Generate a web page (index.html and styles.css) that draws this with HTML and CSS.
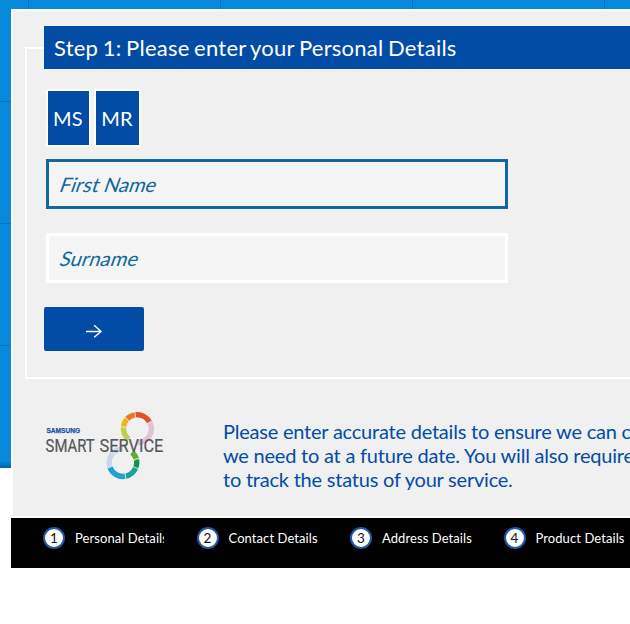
FILE: index.html
```html
<!DOCTYPE html>
<html lang="en">
<head>
<meta charset="utf-8">
<title>Personal Details</title>
<link rel="stylesheet" href="styles.css">
</head>
<body>
<div class="backdrop"></div>
<main class="page">
  <section class="panel">
    <form class="step">
      <h1 class="legend">Step 1: Please enter your Personal Details</h1>
      <div class="titles">
        <button type="button" class="title title-ms">MS</button>
        <button type="button" class="title title-mr">MR</button>
      </div>
      <label class="field active"><span class="hint">First Name</span><input type="text"></label>
      <label class="field"><span class="hint surname">Surname</span><input type="text"></label>
      <button type="button" class="next" aria-label="Next">
        <svg width="18" height="14" viewBox="0 0 18 14"><path d="M1 7.5H16M9.2 1.2L16 7.5L9.2 13.3" fill="none" stroke="#fff" stroke-width="1.4"/></svg>
      </button>
    </form>
    <div class="info">
      <svg class="logo" width="120" height="72" viewBox="45 409 120 72">
        <g fill="none" stroke-width="5.4">
          <path d="M128.6 439.2A13.9 13.9 0 0 1 123.6 427" stroke="#bdcf4b"/>
          <path d="M123.6 427A13.9 13.9 0 0 1 127 419" stroke="#edb51c"/>
          <path d="M127 419A13.9 13.9 0 0 1 135.5 414.9" stroke="#ea7927"/>
          <path d="M135.5 414.9A13.9 13.9 0 0 1 149.7 422.2" stroke="#e45128"/>
          <path d="M149.7 422.2A13.9 13.9 0 0 1 137.4 442.7" stroke="#e2c3d5"/>
          <path d="M123 448.9A13.9 13.9 0 0 0 109.9 467.3" stroke="#ccd6e8"/>
          <path d="M109.9 467.3A13.9 13.9 0 0 0 125.5 476.2" stroke="#249fd2"/>
          <path d="M125.5 476.2A13.9 13.9 0 0 0 135.7 467.8" stroke="#1aa19b"/>
          <path d="M135.7 467.8A13.9 13.9 0 0 0 136.6 460" stroke="#07984d"/>
          <path d="M136.6 460A13.9 13.9 0 0 0 132 452.4" stroke="#65a738"/>
        </g>
        <path d="M120 426.5L126.5 427.5M134.6 411.5L135.7 418M152.3 420.6L147 423.8M125 417L129 421M106.8 468.5L112.5 466M125 473L126 479.5M133 466.5L139 469M133 460L140 457.8M111 450L115 455" stroke="#f0f0f0" stroke-width=".8"/>
        <text class="brand" x="46.5" y="432.7" textLength="33.5" lengthAdjust="spacingAndGlyphs">SAMSUNG</text>
        <text class="product" x="45.6" y="451.8" textLength="49" lengthAdjust="spacingAndGlyphs">SMART</text>
        <text class="product" x="99.6" y="451.8" textLength="63.8" lengthAdjust="spacingAndGlyphs">SERVICE</text>
      </svg>
      <p class="note">Please enter accurate details to ensure we can contact you if<br>we need to at a future date. You will also require your details<br>to track the status of your service.</p>
    </div>
  </section>
  <nav class="steps">
    <div class="item"><span class="num">1</span><span class="label first">Personal Details</span></div>
    <div class="item"><span class="num">2</span><span class="label">Contact Details</span></div>
    <div class="item"><span class="num">3</span><span class="label">Address Details</span></div>
    <div class="item"><span class="num">4</span><span class="label">Product Details</span></div>
  </nav>
</main>
</body>
</html>
```
FILE: styles.css
```css
* { box-sizing: border-box; }
html { overflow: hidden; }
body {
  margin: 0;
  height: 624px;
  overflow: hidden;
  position: relative;
  background: #fff;
  font-family: Lato, "Liberation Sans", sans-serif;
}
button, input { font-family: inherit; margin: 0; }
.backdrop {
  position: absolute;
  inset: 0 0 auto;
  height: 468px;
  background:
    linear-gradient(transparent 461px, #0069ad 467px),
    repeating-linear-gradient(90deg, transparent 0 28px, #0474bc 28px 29px, transparent 29px 192px),
    repeating-linear-gradient(transparent 0 101px, #0474bc 101px 102px, transparent 102px 122px),
    #078adb;
  background-size: auto, 192px 100%, 100% 122px, auto;
}
.page { position: relative; padding: 9px 0 0 11px; width: 630px; overflow: hidden; }
.panel {
  height: 509px;
  border: 2px solid #fff;
  border-right: 0;
  background: #f0f0f0;
  padding: 36px 0 0 12px;
}
.step {
  height: 332px;
  border: 2px solid #fff;
  border-right: 0;
  padding-left: 17px;
  display: flex;
  flex-direction: column;
  align-items: flex-start;
}
.legend {
  margin: -23px 0 20px;
  width: 100%;
  height: 43px;
  flex: none;
  padding-left: 10px;
  background: #034ca6;
  color: #fff;
  font-size: 22px;
  font-weight: 400;
  line-height: 44px;
  letter-spacing: .24px;
  word-spacing: -1.3px;
  white-space: nowrap;
}
.titles { display: flex; gap: 3px; margin-left: 2px; }
.title {
  height: 58px;
  padding: 0 1px 0 0;
  border: 2px solid #fff;
  border-radius: 2px;
  background: #034ca6;
  color: #fff;
  font-size: 20px;
  letter-spacing: .3px;
}
.title-ms { width: 45px; }
.title-mr { width: 47px; }
.field {
  position: relative;
  width: 462px;
  height: 50px;
  flex: none;
  margin: 12px 0 0 2px;
  padding-left: 12px;
  border: 3px solid #fff;
  background: #f5f5f5;
  color: #11689f;
}
.field + .field { margin-top: 24px; }
.field.active { border-color: #11689f; }
.field input {
  position: absolute;
  inset: 0;
  border: 0;
  background: transparent;
  outline: none;
  font-size: 20px;
}
.hint {
  display: inline-block;
  font-size: 20px;
  line-height: 44px;
  transform: skewX(-19deg);
}
.hint.surname { letter-spacing: .15px; }
.next {
  width: 100px;
  height: 44px;
  margin-top: 24px;
  padding: 4px 0 0;
  border: 0;
  border-radius: 2px;
  background: #034ca6;
  display: flex;
  align-items: center;
  justify-content: center;
}
.info { display: flex; padding: 30px 0 0 20px; }
.logo { flex: none; margin-right: 58px; }
.brand { font: 700 6.8px "Liberation Sans", sans-serif; fill: #1850a0; stroke: #1850a0; stroke-width: .25px; }
.product { font: 400 17.8px "Roboto", sans-serif; fill: #55565a; stroke: #55565a; stroke-width: .2px; }
.note {
  margin: 10px 0 0;
  color: #034ca6;
  font-size: 20px;
  line-height: 24px;
  letter-spacing: -.22px;
  white-space: nowrap;
}
.steps {
  height: 50px;
  background: #000;
  color: #fff;
  padding: 9px 0 0 32px;
  display: flex;
}
.item { display: flex; width: 153.5px; height: 22px; flex: none; }
.num {
  width: 22px;
  height: 22px;
  border: 2px solid #1c58ae;
  border-radius: 50%;
  background: #fff;
  color: #111;
  font-size: 13.5px;
  line-height: 18px;
  text-align: center;
}
.label { margin-left: 10px; font-size: 13px; line-height: 23px; letter-spacing: .08px; white-space: nowrap; }
.first { width: 89px; overflow: hidden; }
```
